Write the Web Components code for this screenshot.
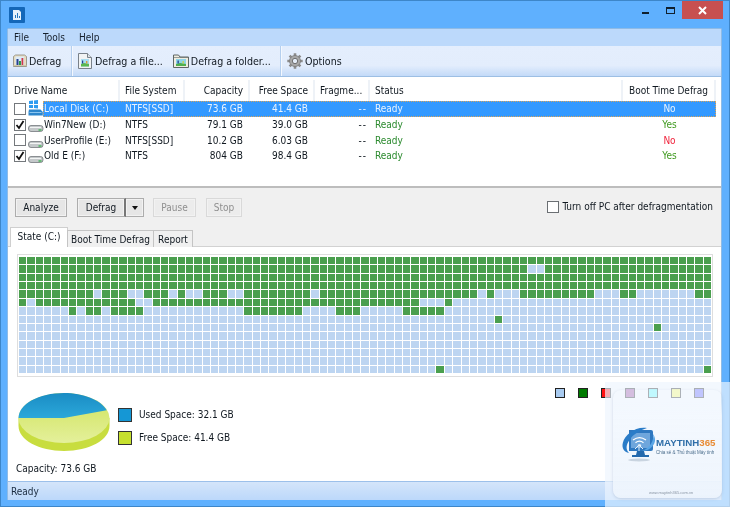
<!DOCTYPE html>
<html>
<head>
<meta charset="utf-8">
<title>Defrag</title>
<style>
    html, body { margin: 0; padding: 0; width: 730px; height: 507px; overflow: hidden; background: #5fb0fe; }
    body { font: 10px "DejaVu Sans Condensed", "Liberation Sans", sans-serif; color: #101820; }
    defrag-window { filter: blur(.3px); }
</style>
</head>
<body>

<defrag-window>
    <menu-bar></menu-bar>
    <tool-bar>
        <tool-button icon="chart" sep style="width:61px;gap:1px;padding-left:1px">Defrag</tool-button>
        <tool-button icon="file">Defrag a file...</tool-button>
        <tool-button icon="folder" sep>Defrag a folder...</tool-button>
        <tool-button icon="gear" style="padding-left:6px">Options</tool-button>
    </tool-bar>
    <drive-list>
        <drive-row name="Local Disk (C:)" fs="NTFS[SSD]" cap="73.6 GB" free="41.4 GB" boot="No" selected system></drive-row>
        <drive-row name="Win7New (D:)" fs="NTFS" cap="79.1 GB" free="39.0 GB" boot="Yes" checked></drive-row>
        <drive-row name="UserProfile (E:)" fs="NTFS[SSD]" cap="10.2 GB" free="6.03 GB" boot="No"></drive-row>
        <drive-row name="Old E (F:)" fs="NTFS" cap="804 GB" free="98.4 GB" boot="Yes" checked></drive-row>
    </drive-list>
    <action-bar></action-bar>
    <tab-strip></tab-strip>
    <state-panel>
        <cluster-map></cluster-map>
        <usage-summary></usage-summary>
    </state-panel>
    <status-bar>Ready</status-bar>
</defrag-window>
<site-mark></site-mark>

<script>
class DefragWindow extends HTMLElement {
    constructor() {
        super();
        this.attachShadow({ mode: 'open' });
        this.shadowRoot.innerHTML = `
            <style>
                :host { display: flex; flex-direction: column; width: 730px; height: 507px; box-sizing: border-box;
                        background: #5fb0fe; border: 1px solid #3d86c9; }
                .title { flex: none; height: 27px; display: flex; align-items: flex-start; padding-left: 8px; }
                .app { margin-top: 6px; }
                .ctl { margin-left: auto; display: flex; align-items: flex-start; margin-right: 6px; }
                .min { width: 7px; height: 2px; background: #10202e; margin: 11px 17px 0 0; }
                .max { width: 7px; height: 4px; border: 1.5px solid #10202e; border-top-width: 2px; margin: 6px 7px 0 0; }
                .close { width: 41px; height: 18px; background: #c75050; display: flex; justify-content: center; align-items: center; }
                .client { flex: 1; min-height: 0; margin: 0 7px 6px 6px; display: flex; flex-direction: column;
                          border: 1px solid #8fbbe6; border-bottom: 0; background: #fff; border-radius: 2px 2px 0 0; }
            </style>
            <div class="title">
                <svg class="app" width="16" height="16" viewBox="0 0 16 16">
                    <rect width="16" height="16" rx="1" fill="#1467b8"/>
                    <path d="M4 3h6l2 2v8H4z" fill="#e8f2fb"/>
                    <path d="M6 11V8h1v3zm2 0V6h1v5zm2 0V9h1v2z" fill="#2a78bd"/>
                </svg>
                <div class="ctl">
                    <div class="min"></div>
                    <div class="max"></div>
                    <div class="close">
                        <svg width="9" height="9" viewBox="0 0 9 9"><path d="M1 1l7 7M8 1L1 8" stroke="#fff" stroke-width="2"/></svg>
                    </div>
                </div>
            </div>
            <div class="client"><slot></slot></div>
        `;
    }
}

class MenuBar extends HTMLElement {
    constructor() {
        super();
        this.attachShadow({ mode: 'open' });
        this.shadowRoot.innerHTML = `
            <style>
                :host { display: flex; flex: none; height: 17px; align-items: center; gap: 14px; padding-left: 6px;
                        background: #bcd9fb; color: #16202c; }
            </style>
            <span>File</span><span>Tools</span><span>Help</span>
        `;
    }
}

class ToolBar extends HTMLElement {
    constructor() {
        super();
        this.attachShadow({ mode: 'open' });
        this.shadowRoot.innerHTML = `
            <style>
                :host { display: flex; flex: none; height: 31px; align-items: center; padding: 0 0 0 3px; box-sizing: border-box;
                        background: linear-gradient(#e4eefd 0, #e3edfc 65%, #c3daf8 100%);
                        border-bottom: 1px solid #9dbfe4; font-size: 10.600px; }
            </style>
            <slot></slot>
        `;
    }
}

const TOOL_ICONS = {
    chart: `<path d="M1.500 3.500l2-1.500h9l2 1.500v10h-13z" fill="#e6dcc0" stroke="#8a8778" stroke-width=".8"/>
            <path d="M3.500 3.500h8.500v8.500H3.500z" fill="#dcebf8"/>
            <path d="M4.500 12V6h2v6z" fill="#27408f"/><path d="M7 12V8h2v4z" fill="#2f9a4a"/><path d="M9.500 12V5h1.800v7z" fill="#cf3a4a"/>
            <path d="M1.500 12.500h13" stroke="#cfc8a8"/>`,
    file: `<path d="M1.500 .5h9l4 4v11h-13z" fill="#f1f3f4" stroke="#79818a"/><path d="M10.500 .5v4h4" fill="#dfe3e7" stroke="#79818a"/>
           <path d="M4 6h8v7.500H4z" fill="#a8dcf0"/><path d="M4 11l3-1 5 1v2.500H4z" fill="#5cb84f"/>
           <path d="M5 10.500V7.500h1.200v3z" fill="#23408e"/><path d="M9 10.500V8h1.400v2.500z" fill="#d99a3a"/>`,
    folder: `<path d="M.5 2h5l1.500 2h8.500v10.500H.5z" fill="#efede0" stroke="#5f6664"/><path d="M.5 4.500h15" stroke="#5f6664" stroke-width=".6"/>
             <path d="M3 6h10v7H3z" fill="#8fd4e8"/><path d="M3 11l4-1 6 1v2H3z" fill="#4fb04d"/>
             <path d="M4.500 10.500V7.500h1.300v3z" fill="#23408e"/><path d="M9.500 10.500V8h1.400v2.500z" fill="#c9cf50"/>`,
    gear: `<g transform="translate(8 8)"><g stroke="#8a8a8a" stroke-width="2.600"><path d="M0-7.700V7.700M-7.700 0H7.700M-5.400-5.400L5.400 5.400M5.400-5.400L-5.400 5.400"/></g><circle r="5.500" fill="#a8a8a8" stroke="#7a7a7a" stroke-width=".8"/><circle r="2.700" fill="#e3ebf6" stroke="#6f6f6f"/></g>`
};

class ToolButton extends HTMLElement {
    constructor() {
        super();
        this.attachShadow({ mode: 'open' });
        this.shadowRoot.innerHTML = `
            <style>
                :host { display: flex; align-items: center; height: 100%; gap: 2px; padding: 0 5px; box-sizing: border-box; white-space: nowrap; flex: none; }
                :host([sep]) { border-right: 1px solid #b5cfee; box-shadow: 1px 0 0 #f4f8fe; padding-right: 9px; }
                svg { flex: none; }
            </style>
            <svg width="16" height="16" viewBox="0 0 16 16"></svg><slot></slot>
        `;
    }
    connectedCallback() {
        this.shadowRoot.querySelector('svg').innerHTML = TOOL_ICONS[this.getAttribute('icon')];
    }
}

class DriveList extends HTMLElement {
    constructor() {
        super();
        this.attachShadow({ mode: 'open' });
        this.shadowRoot.innerHTML = `
            <style>
                :host { display: block; flex: none; height: 111px; box-sizing: border-box; background: #fff;
                        border-bottom: 2px solid #bdbdbd; }
                .head { display: grid; grid-template-columns: 112px 65px 65px 65px 55px 253px 93px; height: 21px; padding-top: 3px; box-sizing: content-box; width: 708px; }
                .head span { display: flex; align-items: center; padding: 0 5px; box-sizing: border-box; white-space: nowrap;
                             border-right: 2px solid #eef2f7; }
                .r { justify-content: flex-end; padding-right: 5px; }
                .c { justify-content: center; }
            </style>
            <div class="head">
                <span style="padding-left:6px">Drive Name</span><span>File System</span><span class="r">Capacity</span><span class="r">Free Space</span>
                <span>Fragme...</span><span>Status</span><span class="c">Boot Time Defrag</span>
            </div>
            <slot></slot>
        `;
    }
}

class DriveRow extends HTMLElement {
    constructor() {
        super();
        this.attachShadow({ mode: 'open' });
    }
    connectedCallback() {
        const selected = this.hasAttribute('selected');
        const boot = this.getAttribute('boot');
        const bootColor = selected ? '#eaf4ff' : boot === 'Yes' ? '#3f9a1e' : '#f0243c';
        const icon = this.hasAttribute('system')
            ? `<path d="M1 0l4-.5V3H1zm5-.6L10-1v4H6zM1 4h4v3H1zm5 0h4v3.400L6 7z" fill="#2f9cf0"/><path d="M1 8.500h11.500l2.300 2.500v3.500H.5V11z" fill="#2d86cc"/><path d="M1.500 11.500h12" stroke="#8cc6f0"/>`
            : `<rect x=".5" y="8.500" width="14.500" height="6" rx="2.500" fill="#c4c8ca" stroke="#73787c" stroke-width=".8"/><path d="M2 10.500h11" stroke="#f2f4f4"/><path d="M10.500 13h3" stroke="#34b04a" stroke-width="1.300"/>`;
        this.shadowRoot.innerHTML = `
            <style>
                :host { display: block; height: 15.7px; width: 708px; }
                .row { position: relative; display: grid; grid-template-columns: 112px 65px 65px 65px 55px 253px 93px; height: 100%;
                       align-items: center; ${selected ? 'color: #e9f3ff;' : ''} }
                .row > span { padding: 0 7px 0 5px; box-sizing: border-box; white-space: nowrap; position: relative; }
                .sel { position: absolute; left: 35px; right: 0; top: 0; bottom: 0; box-sizing: border-box; background: #3399ff; border: 1px dotted #d9a45a; }
                .row > .name { display: flex; align-items: center; padding: 0 0 0 6px; }
                .box { flex: none; width: 10px; height: 10px; border: 1px solid #74787c; background: #fff; margin-right: 2px; display: flex; }
                .ico { flex: none; margin-right: 1px; overflow: visible; }
                .r { text-align: right; }
                .c { text-align: center; }
                .ready { color: ${selected ? '#e9f3ff' : '#2b8a2e'}; }
            </style>
            <div class="row">
                ${selected ? '<div class="sel"></div>' : ''}
                <span class="name">
                    <i class="box">${this.hasAttribute('checked') ? '<svg width="10" height="10" viewBox="0 0 10 10"><path d="M1.500 5l2.500 3 4.500-7" fill="none" stroke="#111" stroke-width="1.800"/></svg>' : ''}</i>
                    <svg class="ico" width="15" height="15" viewBox="0 0 15 15">${icon}</svg>
                    ${this.getAttribute('name')}
                </span>
                <span>${this.getAttribute('fs')}</span>
                <span class="r">${this.getAttribute('cap')}</span>
                <span class="r">${this.getAttribute('free')}</span>
                <span class="r" style="padding-right:3px;letter-spacing:1px">--</span>
                <span class="ready">Ready</span>
                <span class="c" style="color:${bootColor};padding:0">${boot}</span>
            </div>
        `;
    }
}

class ActionBar extends HTMLElement {
    constructor() {
        super();
        this.attachShadow({ mode: 'open' });
        this.shadowRoot.innerHTML = `
            <style>
                :host { display: flex; flex: none; height: 39px; align-items: flex-start; padding: 10px 0 0 7px; box-sizing: border-box; background: #f0f0f0; }
                .btn { height: 19px; box-sizing: border-box; border: 1px solid #adadad; background: #e6e6e6; display: flex; align-items: center;
                       justify-content: center; box-shadow: inset 0 0 0 1px #f2f2f2; }
                .dis { color: #8f8f8f; border-color: #d9d9d9; background: #ececec; }
                .arrow { width: 0; height: 0; border: 3.500px solid transparent; border-top: 4px solid #111; border-bottom: 0; }
                .split { margin-left: 10px; width: 67px; display: flex; }
                .split .a { width: 49px; border-right: 2px solid #777; }
                .split .b { flex: 1; border-left: 0; }
                label { margin-left: auto; margin-right: 8px; display: flex; align-items: center; gap: 3px; margin-top: -1px; height: 19px; }
                label i { width: 10px; height: 10px; border: 1px solid #6b6f73; background: #fff; }
            </style>
            <div class="btn" style="width:52px">Analyze</div>
            <div class="split"><div class="btn a">Defrag</div><div class="btn b"><div class="arrow"></div></div></div>
            <div class="btn dis" style="width:43px;margin-left:9px">Pause</div>
            <div class="btn dis" style="width:36px;margin-left:10px">Stop</div>
            <label><i></i>Turn off PC after defragmentation</label>
        `;
    }
}

class TabStrip extends HTMLElement {
    constructor() {
        super();
        this.attachShadow({ mode: 'open' });
        this.shadowRoot.innerHTML = `
            <style>
                :host { display: flex; flex: none; height: 20px; align-items: flex-end; padding-left: 2px; background: linear-gradient(#f0f0f0 19px, #d2d2d2 19px); }
                .tab { height: 17px; box-sizing: border-box; border: 1px solid #c4c4c4; border-bottom: 0; background: #f0f0f0; display: flex;
                       align-items: center; justify-content: center; margin-left: -1px; }
                .on { height: 20px; background: #fff; margin-left: 0; border-color: #cfcfcf; padding-bottom: 3px; }
            </style>
            <div class="tab on" style="width:58px">State (C:)</div>
            <div class="tab" style="width:87px">Boot Time Defrag</div>
            <div class="tab" style="width:40px">Report</div>
        `;
    }
}

class StatePanel extends HTMLElement {
    constructor() {
        super();
        this.attachShadow({ mode: 'open' });
        this.shadowRoot.innerHTML = `
            <style>
                :host { display: flex; flex-direction: column; flex: 1; min-height: 0; background: #fff; padding: 7px 7px 0 9px; }
            </style>
            <slot></slot>
        `;
    }
}

// green runs per row, [from, to] in cells
const USED_CELLS = [
    [[0, 82]],
    [[0, 60], [63, 82]],
    [[0, 82]],
    [[0, 82]],
    [[0, 8], [10, 12], [15, 17], [19, 19], [22, 24], [27, 34], [36, 54], [56, 56], [60, 68], [72, 73], [81, 82]],
    [[0, 0], [2, 13], [16, 47], [51, 51]],
    [[6, 6], [8, 9], [11, 14], [27, 33], [38, 40], [46, 50]],
    [[57, 57]],
    [[76, 76]],
    [], [], [], [],
    [[50, 50], [82, 82]]
];

class ClusterMap extends HTMLElement {
    constructor() {
        super();
        this.attachShadow({ mode: 'open' });
        this.shadowRoot.innerHTML = `
            <style>
                :host { display: block; flex: none; box-sizing: border-box; width: 696px; height: 123px; padding: 2px 1px 3px 1px;
                        border: 1px solid #dedede; }
                .grid { display: grid; grid-template-columns: repeat(83, 1fr); grid-template-rows: repeat(14, 1fr); height: 100%; gap: 1px; }
                .grid i { background: #bdd5f1; }
                .grid i.u { background: #4a9f4e; }
            </style>
            <div class="grid"></div>
        `;
    }
    connectedCallback() {
        let html = '';
        USED_CELLS.forEach(runs => {
            for (let c = 0; c < 83; c++) {
                const used = runs.some(r => c >= r[0] && c <= r[1]);
                html += used ? '<i class="u"></i>' : '<i></i>';
            }
        });
        this.shadowRoot.querySelector('.grid').innerHTML = html;
    }
}

class UsageSummary extends HTMLElement {
    constructor() {
        super();
        this.attachShadow({ mode: 'open' });
        this.shadowRoot.innerHTML = `
            <style>
                :host { display: grid; grid-template-columns: 101px 1fr; flex: 1; min-height: 0; position: relative; }
                .left { display: flex; flex-direction: column; padding-top: 16px; }
                .cap { margin: 12px 0 0 -1px; white-space: nowrap; }
                .mid { padding-top: 30px; display: flex; flex-direction: column; gap: 8px; }
                .item { display: flex; align-items: center; gap: 7px; height: 15px; }
                .sw { width: 12px; height: 12px; border: 1px solid #333; }
                .legend { position: absolute; top: 11px; left: 538px; display: flex; gap: 13.200px; }
                .legend i { display: block; width: 8px; height: 8px; border: 1px solid #222; }
            </style>
            <div class="left">
                <svg width="92" height="58" viewBox="0 0 92 58" style="margin-left:1px;flex:none">
                    <defs>
                        <linearGradient id="blue" x1="0" y1="0" x2="0" y2="1"><stop offset="0" stop-color="#1a8cc4"/><stop offset="1" stop-color="#2ba8da"/></linearGradient>
                        <linearGradient id="lime" x1="0" y1="0" x2="0" y2="1"><stop offset="0" stop-color="#cfe35a"/><stop offset="1" stop-color="#e4f09b"/></linearGradient>
                    </defs>
                    <path d="M.5 25v8c0 13.800 20.400 25 45.500 25s45.500-11.200 45.500-25v-8z" fill="#c8dd3f"/>
                    <ellipse cx="46" cy="25" rx="45.500" ry="25" fill="url(#lime)"/>
                    <path d="M46 25H.5C.5 11.200 20.900 0 46 0c19.500 0 36.500 6.800 42.700 17.200z" fill="url(#blue)"/>
                </svg>
                <div class="cap">Capacity: 73.6 GB</div>
            </div>
            <div class="mid">
                <div class="item"><span class="sw" style="background:#1597d5"></span>Used Space: 32.1 GB</div>
                <div class="item"><span class="sw" style="background:#c6e02e"></span>Free Space: 41.4 GB</div>
            </div>
            <div class="legend">
                <i style="background:#a9cbf0"></i><i style="background:#007a00"></i><i style="background:#ff1010"></i>
                <i style="background:#a04ca0"></i><i style="background:#60ffff"></i><i style="background:#ffff60"></i><i style="background:#6060ff"></i>
            </div>
        `;
    }
}

class StatusBar extends HTMLElement {
    constructor() {
        super();
        this.attachShadow({ mode: 'open' });
        this.shadowRoot.innerHTML = `
            <style>
                :host { display: flex; flex: none; height: 19px; align-items: center; padding-left: 3px; box-sizing: border-box; color: #1b2c40;
                        background: linear-gradient(#d4e5fa, #bcd8fa); border-top: 1px solid #9cc0ea; }
            </style>
            <slot></slot>
        `;
    }
}

class SiteMark extends HTMLElement {
    constructor() {
        super();
        this.attachShadow({ mode: 'open' });
        this.shadowRoot.innerHTML = `
            <style>
                :host { position: absolute; left: 605px; top: 382px; width: 125px; height: 125px; background: rgba(238,245,254,.68); }
                .card { position: absolute; left: 8px; top: 8px; width: 109px; height: 108px; border-radius: 8px; box-sizing: border-box;
                        background: linear-gradient(rgba(255,255,255,0) 10%, rgba(243,248,254,.8) 24%, rgba(238,244,252,.85));
                        box-shadow: 0 1px 3px rgba(120,140,170,.3); filter: blur(.3px); }
                svg { position: absolute; left: 9px; top: 37px; overflow: visible; }
                .b { position: absolute; left: 43px; top: 47px; font: bold 9.700px "Liberation Sans", sans-serif; color: #2f6ea8; white-space: nowrap; }
                .b em { font-style: normal; color: #e88b35; }
                .s { position: absolute; left: 43px; top: 60px; font: 4.500px "Liberation Sans", sans-serif; color: #4a6c8c; white-space: nowrap; }
                .u { position: absolute; left: 36px; top: 100px; font: 4px "Liberation Sans", sans-serif; color: #8a96a4; white-space: nowrap; }
            </style>
            <div class="card">
                <svg width="33" height="35" viewBox="0 0 33 35">
                    <ellipse cx="17" cy="33" rx="11" ry="1.500" fill="#c9d4e0"/>
                    <path d="M7 3h22a2 2 0 0 1 2 2v17a2 2 0 0 1-2 2H7z" fill="#2f78c0"/>
                    <path d="M9 6h19v15H9z" fill="#6fa6dc"/>
                    <path d="M15 24h7l1 4h4v2H10v-2h4z" fill="#2369ad"/>
                    <path d="M25 1C14-1 3 7 .8 16c-1.200 5 1.200 9 6.200 10-3-3-3-7-1-10.500C9 9 16 4 25 1z" fill="#2a7cc8"/>
                    <path d="M11 13c4-3 9-3 13 0M13.500 15.800c2.500-2 5.500-2 8 0M16 18.500c1-1 2-1 3 0" fill="none" stroke="#fff" stroke-width="1.200"/>
                    <path d="M17 19v5M13 22l4-4 4 4" fill="none" stroke="#e8f2fb" stroke-width="1"/>
                    <path d="M31 7c1.500 6-3 14-11 17 6 0 12-4 13-10 .300-3-.5-5-2-7z" fill="#5aa6e6"/>
                </svg>
                <div class="b">MAYTINH<em>365</em></div>
                <div class="s">Chia sẻ &amp; Thủ thuật Máy tính</div>
                <div class="u">www.maytinh365.com.vn</div>
            </div>
        `;
    }
}

customElements.define('defrag-window', DefragWindow);
customElements.define('menu-bar', MenuBar);
customElements.define('tool-bar', ToolBar);
customElements.define('tool-button', ToolButton);
customElements.define('drive-list', DriveList);
customElements.define('drive-row', DriveRow);
customElements.define('action-bar', ActionBar);
customElements.define('tab-strip', TabStrip);
customElements.define('state-panel', StatePanel);
customElements.define('cluster-map', ClusterMap);
customElements.define('usage-summary', UsageSummary);
customElements.define('status-bar', StatusBar);
customElements.define('site-mark', SiteMark);
</script>
</body>
</html>
